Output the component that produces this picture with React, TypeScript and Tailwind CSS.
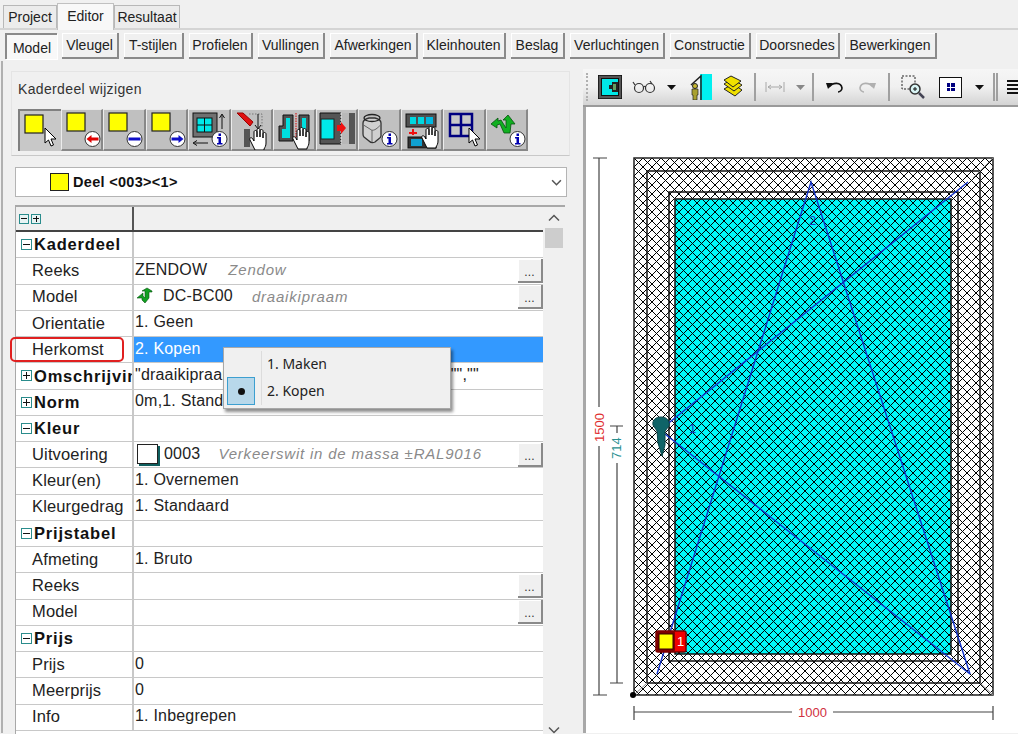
import type { ReactNode } from 'react';

const subTabs = [
  { label: 'Model', w: 52, active: true },
  { label: 'Vleugel', w: 57 },
  { label: 'T-stijlen', w: 60 },
  { label: 'Profielen', w: 64 },
  { label: 'Vullingen', w: 67 },
  { label: 'Afwerkingen', w: 88 },
  { label: 'Kleinhouten', w: 83 },
  { label: 'Beslag', w: 54 },
  { label: 'Verluchtingen', w: 95 },
  { label: 'Constructie', w: 81 },
  { label: 'Doorsnedes', w: 84 },
  { label: 'Bewerkingen', w: 92 },
];

function Cursor({ x, y }: { x: number; y: number }) {
  return (
    <path
      transform={`translate(${x} ${y})`}
      d="M0 0v15l3.500-3 2.500 6 2.500-1-2.500-6h5z"
      fill="#fff"
      stroke="#000"
      strokeWidth="1"
    />
  );
}

function Hand({ x, y }: { x: number; y: number }) {
  return (
    <path
      transform={`translate(${x} ${y})`}
      d="M5 20 1 12c-1-2 1-3 2.500-1.500L5 13V4c0-2 3-2 3 0v5V2c0-2 3-2 3 0v7-6c0-2 3-2 3 0v7-4c0-2 3-2 3 0v9c0 3-1 4-2 6v1H6z"
      fill="#fff"
      stroke="#000"
      strokeWidth="1"
    />
  );
}

function Badge({ kind }: { kind: 'left' | 'minus' | 'right' | 'info' }) {
  return (
    <g>
      <circle cx="30.500" cy="29" r="7.500" fill="#fff" stroke="#333" strokeWidth="1" />
      {kind === 'left' && <path d="M24.500 29l5-4v2.500h7v3h-7V33z" fill="#e00000" />}
      {kind === 'right' && <path d="M36.500 29l-5-4v2.500h-7v3h7V33z" fill="#1010c8" />}
      {kind === 'minus' && <rect x="24.500" y="27.500" width="12" height="3" fill="#1010c8" />}
      {kind === 'info' && (
        <g fill="#0000b0">
          <rect x="29.500" y="23.500" width="2.500" height="2.500" />
          <path d="M28 27h4v6h1.500v1.500H28V33h1.500v-4.500H28z" />
        </g>
      )}
    </g>
  );
}

function Square({ x = 5, y = 3 }: { x?: number; y?: number }) {
  return <rect x={x} y={y} width="18" height="18" fill="#ffff00" stroke="#222" strokeWidth="1.200" />;
}

const toolIcons: ReactNode[] = [
  <>
    <Square x={5} y={4} />
    <Cursor x={25} y={17} />
  </>,
  <>
    <Square />
    <Badge kind="left" />
  </>,
  <>
    <Square />
    <Badge kind="minus" />
  </>,
  <>
    <Square />
    <Badge kind="right" />
  </>,
  <>
    <rect x="4" y="3" width="24" height="24" fill="#707070" stroke="#111" />
    <rect x="8" y="8" width="15" height="14" fill="#00e8e8" stroke="#111" />
    <path d="M15.500 8v14M8 15h15" stroke="#111" />
    <path d="M33 19V5m-2.500 3L33 4l2.500 4M19 33H5m3-2.500L4 33l4 2.500" stroke="#111" fill="none" />
    <Badge kind="info" />
  </>,
  <>
    <path d="M5 3h6l10 9-3 4z" fill="#e01010" stroke="#900" />
    <path d="M12 19v18h6V19z" fill="#555" />
    <path d="M17 4h13v14" stroke="#777" strokeDasharray="1.500 1.500" fill="none" />
    <path d="M26 4v14m-3-3 3 4 3-4" stroke="#111" fill="none" />
    <Hand x={17} y={18} />
  </>,
  <>
    <path d="M5 31V16h4V5h10v26z" fill="#505050" stroke="#111" />
    <path d="M8 28V19h4V8h4v20z" fill="#00e0e0" />
    <path d="M25 5h10v26H25z" fill="#505050" stroke="#111" />
    <rect x="28" y="8" width="4" height="16" fill="#00e0e0" />
    <path d="M22 3v24" stroke="#d04040" strokeDasharray="1.500 1" strokeWidth="1.500" />
    <Hand x={18} y={17} />
  </>,
  <>
    <path d="M3 3h21v31H3z" fill="#555" stroke="#111" />
    <rect x="4" y="9" width="13" height="20" fill="#00eaea" stroke="#222" />
    <path d="M24 3h14v31H24z" fill="#b8b8b8" />
    <path d="M32 3h6v31h-6z" fill="#555" />
    <path d="M24 3v31" stroke="#eee" strokeDasharray="2 1" />
    <path d="M20 15h4v-3l5 6-5 6v-3h-4z" fill="#f01010" />
  </>,
  <>
    <path d="M4 13c0-3 2-4 6-5h6c4 1 6 2 6 5v13c0 2-3 3-6 6-2 1-4 1-6-1l-5-4c-1-1-1-2-1-3z" fill="#d0d0d0" stroke="#333" strokeWidth="1.300" />
    <path d="M4.500 15l8 5c3 1 6-2 9-5M13 20v12" stroke="#666" fill="none" />
    <ellipse cx="13" cy="8" rx="8" ry="3.500" fill="none" stroke="#222" strokeWidth="1.300" />
    <Badge kind="info" />
  </>,
  <>
    <rect x="4" y="4" width="30" height="13" fill="#505050" stroke="#111" />
    <rect x="8" y="7" width="6" height="7" fill="#00d8e0" />
    <rect x="16" y="7" width="6" height="7" fill="#00d8e0" />
    <rect x="24" y="7" width="7" height="7" fill="#00b8e0" />
    <path d="M7 22h3v-3h2v3h3v2h-3v1h-2v-1H7z" fill="#f01010" />
    <rect x="6" y="27" width="28" height="11" fill="#333" stroke="#111" />
    <rect x="9" y="29" width="11" height="7" fill="#10a0d0" />
    <Hand x={19} y={16} />
  </>,
  <>
    <rect x="6" y="4" width="22" height="22" fill="#c8c8c8" stroke="#000080" strokeWidth="2.500" />
    <path d="M17 4v22M6 15h22" stroke="#000080" strokeWidth="2.500" />
    <Cursor x={25} y={18} />
  </>,
  <>
    <path d="M4 14l7-6v3l3-1 5 8V10l-3 0 5-5 7 9h-4l-1 9h-6l-4-9-3 1v3z" fill="#10b020" stroke="#085010" strokeWidth="0.800" />
    <Badge kind="info" />
  </>,
];

const Label = ({ children }: { children: ReactNode }) => (
  <span className="pb-[1px] pl-[16px] text-[16.500px] leading-none tracking-[0.15px] text-[#222]">{children}</span>
);

function Group({ open, children }: { open: boolean; children: string }) {
  return (
    <span className="flex items-center pl-[5px] whitespace-nowrap">
      <span className="relative mr-[2px] flex h-[11px] w-[11px] shrink-0 items-center justify-center border border-[#2a8c8c] bg-white">
        <span className="h-[1px] w-[7px] bg-[#111]" />
        {!open && <span className="absolute h-[7px] w-[1px] bg-[#111]" />}
      </span>
      <span className="text-[16.500px] font-bold leading-none tracking-[0.8px] text-[#111]">{children}</span>
    </span>
  );
}

function Dots() {
  return (
    <span className="flex h-[24px] w-[25px] shrink-0 items-end justify-center border-r-2 border-b-2 border-[#8a8a8a] bg-[#f0f0f0] pb-[3px] text-[12px] leading-none text-[#333] shadow-[inset_1px_1px_0_#fff]">
      ...
    </span>
  );
}

function Row({
  left,
  children,
  dots,
  selected,
}: {
  left: ReactNode;
  children?: ReactNode;
  dots?: boolean;
  selected?: boolean;
}) {
  return (
    <div className="flex h-[26.250px] overflow-hidden border-b border-[#c8c8c8]">
      <div className="flex w-[118px] shrink-0 items-center overflow-hidden border-r-2 border-[#c8c8c8]">{left}</div>
      <div
        className={
          selected
            ? 'flex min-w-0 flex-1 items-center whitespace-nowrap bg-[#3399ff] pl-[1px] text-[16px] leading-none tracking-[0.2px] text-white'
            : 'flex min-w-0 flex-1 items-center whitespace-nowrap pl-[1px] text-[16px] leading-none tracking-[0.2px] text-[#222]'
        }
      >
        <div className="flex min-w-0 flex-1 items-center overflow-hidden pb-[2px]">{children}</div>
        {dots && <Dots />}
      </div>
    </div>
  );
}

const Hint = ({ children, className }: { children: string; className: string }) => (
  <span className={`text-[15px] italic leading-none tracking-[0.8px] text-[#8a8a8a] ${className}`}>{children}</span>
);

function PropertyGrid() {
  return (
    <div className="relative h-[529px] border-t-2 border-l border-[#a8a8a8] bg-white">
      <div className="mr-[22px]">
        <div className="flex h-[25px] border-b-2 border-[#444] bg-[#f0f0f0]">
          <div className="flex w-[118px] items-center gap-[2px] border-r-2 border-[#555] pl-[3px]">
            <span className="flex h-[10px] w-[10px] items-center justify-center border border-[#2a8c8c] bg-[#e8f4f4]">
              <span className="h-[1px] w-[6px] bg-[#111]" />
            </span>
            <span className="relative flex h-[10px] w-[10px] items-center justify-center border border-[#2a8c8c] bg-[#e8f4f4]">
              <span className="h-[1px] w-[6px] bg-[#111]" />
              <span className="absolute h-[6px] w-[1px] bg-[#111]" />
            </span>
          </div>
        </div>
        <Row left={<Group open>Kaderdeel</Group>} />
        <Row left={<Label>Reeks</Label>} dots>
          ZENDOW<Hint className="ml-[21px]">Zendow</Hint>
        </Row>
        <Row left={<Label>Model</Label>} dots>
          <svg width="19" height="18" viewBox="0 0 19 18" className="ml-[1px] mr-[8px] shrink-0">
            <path d="M1 11l6-5v3l2 2V4H6l5-3 5 3v1h-3v6l-4 5-3-3v-2z" fill="#10a020" stroke="#0a5010" strokeWidth="0.600" />
          </svg>
          DC-BC00<Hint className="ml-[19px]">draaikipraam</Hint>
        </Row>
        <Row left={<Label>Orientatie</Label>}>1. Geen</Row>
        <Row left={<Label>Herkomst</Label>} selected>
          2. Kopen
        </Row>
        <Row left={<Group open={false}>Omschrijving</Group>}>
          "draaikipraam"
          <span className="ml-[209px]">"",""</span>
        </Row>
        <Row left={<Group open={false}>Norm</Group>}>0m,1. Standaard</Row>
        <Row left={<Group open>Kleur</Group>} />
        <Row left={<Label>Uitvoering</Label>} dots>
          <span className="ml-[2px] mr-[6px] h-[20px] w-[21px] shrink-0 border border-[#222] bg-white shadow-[2px_2px_0_#0f5f5f]" />
          0003<Hint className="ml-[18px]">Verkeerswit in de massa ±RAL9016</Hint>
        </Row>
        <Row left={<Label>Kleur(en)</Label>}>1. Overnemen</Row>
        <Row left={<Label>Kleurgedrag</Label>}>1. Standaard</Row>
        <Row left={<Group open>Prijstabel</Group>} />
        <Row left={<Label>Afmeting</Label>}>1. Bruto</Row>
        <Row left={<Label>Reeks</Label>} dots />
        <Row left={<Label>Model</Label>} dots />
        <Row left={<Group open>Prijs</Group>} />
        <Row left={<Label>Prijs</Label>}>0</Row>
        <Row left={<Label>Meerprijs</Label>}>0</Row>
        <Row left={<Label>Info</Label>}>1. Inbegrepen</Row>
      </div>
      {/* Scrollbar */}
      <div className="absolute top-0 right-0 bottom-0 flex w-[22px] flex-col items-center bg-[#f0f0f0]">
        <svg width="12" height="8" viewBox="0 0 12 8" className="mt-[7px] mb-[6px]">
          <path d="M1 6.500 6 1.500l5 5" fill="none" stroke="#555" strokeWidth="1.500" />
        </svg>
        <div className="h-[20px] w-[18px] bg-[#cdcdcd]" />
      </div>
      <svg width="12" height="8" viewBox="0 0 12 8" className="absolute right-[5px] bottom-[0px]">
        <path d="M1 1.500 6 6.500l5-5" fill="none" stroke="#555" strokeWidth="1.500" />
      </svg>
      {/* Selection popup */}
      <div className="absolute top-[140px] left-[207px] h-[62px] w-[228px] border border-[#a8a8a8] bg-[#f0f0f0] shadow-[2px_3px_3px_rgba(0,0,0,0.45)]">
        <div className="absolute top-[3px] bottom-[3px] left-[37px] w-[1px] bg-[#dcdcdc]" />
        <div className="flex h-[29px] items-center pl-[43px] pt-[2px] font-['Noto_Sans',sans-serif] text-[14px] leading-none text-[#222]">
          1. Maken
        </div>
        <div className="flex h-[28px] items-center pl-[3px] font-['Noto_Sans',sans-serif] text-[14px] leading-none text-[#222]">
          <span className="mr-[12px] flex h-[28px] w-[28px] items-center justify-center border border-[#3c9fd0] bg-[#b8d8ea]">
            <span className="h-[7px] w-[7px] rounded-full bg-[#111]" />
          </span>
          2. Kopen
        </div>
      </div>
      {/* Annotation round the label */}
      <div className="absolute top-[130px] left-[-6px] h-[25px] w-[114px] rounded-[5px] border-2 border-[#e02020]" />
    </div>
  );
}

function Drawing() {
  return (
    <svg width="432" height="626" viewBox="586 108 432 626" className="block">
      <defs>
        <pattern id="hatch" width="9" height="9" patternUnits="userSpaceOnUse" x="634" y="159">
          <path d="M0 9 9 0M0 0l9 9" stroke="#000" strokeWidth="1" fill="none" shapeRendering="crispEdges" />
        </pattern>
      </defs>
      <rect x="634" y="159" width="359" height="537" fill="#fff" />
      <rect x="675" y="200" width="276" height="455" fill="#00f8f8" />
      <rect x="634" y="159" width="359" height="537" fill="url(#hatch)" stroke="#222" strokeWidth="1.500" />
      <rect x="647" y="172" width="333" height="512" fill="none" stroke="#111" strokeWidth="1.500" />
      <rect x="669" y="193" width="289" height="469" fill="none" stroke="#111" strokeWidth="1.500" />
      <rect x="675" y="200" width="276" height="455" fill="none" stroke="#111" strokeWidth="1.500" />
      <path d="M634 696l13-12M993 696l-13-12M993 159l-20 20" stroke="#888" />
      <g stroke="#1030c8" strokeWidth="1.400" fill="none">
        <path d="M657 675 811 183 970 675" />
        <path d="M968 183 660 431 970 675" />
      </g>
      <text x="809" y="226" fill="#1838c0" fontSize="13" fontFamily="Liberation Sans, sans-serif">2</text>
      <text x="689" y="434" fill="#1838c0" fontSize="13" fontFamily="Liberation Sans, sans-serif">1</text>
      <path d="M653 426c-1-5 3-8 8-8 6 0 9 4 8 9l-4 5 0 14-3 11-4-13-1-12z" fill="#0f6468" stroke="#0a4448" />
      <rect x="656" y="632" width="30" height="21" rx="2" fill="#f00000" stroke="#700" strokeWidth="1.500" />
      <rect x="656" y="632" width="19" height="21" rx="2" fill="#800000" />
      <rect x="659" y="635" width="14" height="15" fill="#ffff00" stroke="#300" />
      <text x="677" y="647" fill="#fff" fontSize="13" fontFamily="Liberation Sans, sans-serif">1</text>
      <circle cx="633" cy="696" r="3" fill="#000" />
      {/* Dimension lines */}
      <g stroke="#444" strokeWidth="1.200" fill="none">
        <path d="M593 159h14M593 696h14M599 159v249M599 447v249" />
        <path d="M610 427h13M610 684h13M617 427v7M617 464v220" />
        <path d="M634 707v14M993 707v14M634 713h158M833 713h160" />
      </g>
      <text transform="translate(604 443) rotate(-90)" fill="#e03030" fontSize="13" fontFamily="Liberation Sans, sans-serif">1500</text>
      <text transform="translate(621 460) rotate(-90)" fill="#2a9090" fontSize="13" fontFamily="Liberation Sans, sans-serif">714</text>
      <text x="798" y="718" fill="#d03040" fontSize="13" fontFamily="Liberation Sans, sans-serif">1000</text>
    </svg>
  );
}

const Sep = ({ className }: { className: string }) => <span className={`h-[28px] w-[2px] shrink-0 bg-[#a0a0a0] ${className}`} />;
const Caret = ({ className, color = '#111' }: { className: string; color?: string }) => (
  <svg width="9" height="5" viewBox="0 0 9 5" className={`shrink-0 ${className}`}>
    <path d="M0 0h9L4.500 5z" fill={color} />
  </svg>
);

function DrawToolbar() {
  return (
    <div className="flex h-[39px] items-center overflow-hidden border-b-2 border-[#9a9a9a] bg-linear-to-b from-[#f6f6f6] via-[#f0f0f0] to-[#d4d4d4]">
      <span className="ml-[3px] h-[28px] w-[3px] shrink-0 border-l-2 border-dotted border-[#b0b0b0]" />
      <svg width="24" height="24" viewBox="0 0 24 24" className="ml-[9px] shrink-0">
        <rect width="24" height="24" fill="#555" stroke="#111" strokeWidth="1.500" />
        <rect x="3.500" y="3.500" width="17" height="17" fill="#00e8e8" stroke="#111" />
        <path d="M14 7h6v10h-6v-3h-3v-4h3z" fill="#222" />
        <rect x="15" y="9" width="3" height="6" fill="#60a060" />
      </svg>
      <svg width="25" height="14" viewBox="0 0 25 14" className="ml-[10px] shrink-0">
        <g fill="none" stroke="#333" strokeWidth="1.200">
          <ellipse cx="7" cy="8" rx="4.500" ry="4.500" />
          <ellipse cx="18" cy="8" rx="4.500" ry="4.500" />
          <path d="M11.500 7c1-1 2-1 2 0M1 2l2 3M18 1l2 3" />
        </g>
      </svg>
      <Caret className="ml-[10px]" />
      <svg width="22" height="26" viewBox="0 0 22 26" className="ml-[14px] shrink-0">
        <rect x="10" width="12" height="26" fill="#00f0f0" />
        <path d="M1 11 11 2l0 24" fill="none" stroke="#222" strokeWidth="1.500" />
        <circle cx="5" cy="12" r="2.500" fill="#c8b830" stroke="#222" />
        <path d="M2 15h6v6H7v5H3v-5H2z" fill="#a8a030" stroke="#222" strokeWidth="0.700" />
      </svg>
      <svg width="20" height="24" viewBox="0 0 20 24" className="ml-[11px] shrink-0">
        <g fill="#f0e000" stroke="#222" strokeWidth="1">
          <path d="M1 14l9-5 9 6-7 6z" />
          <path d="M1 9l8-5 10 6-8 6z" />
          <path d="M1 5l7-4 10 5-8 6z" />
        </g>
      </svg>
      <Sep className="ml-[11px]" />
      <svg width="20" height="12" viewBox="0 0 20 12" className="ml-[9px] shrink-0">
        <path d="M1 1v10M19 1v10M3 6h14M3 6l3-2M3 6l3 2M17 6l-3-2M17 6l-3 2" stroke="#a8a8a8" fill="none" />
      </svg>
      <Caret className="ml-[11px]" color="#888" />
      <Sep className="ml-[7px]" />
      <svg width="17" height="12" viewBox="0 0 17 12" className="ml-[12px] shrink-0">
        <path d="M3 6c4-5 12-5 13 1 0 2-2 4-4 4" fill="none" stroke="#111" strokeWidth="1.600" />
        <path d="M0 2h7l-5 6z" fill="#111" />
      </svg>
      <svg width="17" height="12" viewBox="0 0 17 12" className="ml-[16px] shrink-0">
        <path d="M14 6C10 1 2 1 1 7c0 2 2 4 4 4" fill="none" stroke="#b0b0b0" strokeWidth="1.600" />
        <path d="M17 2h-7l5 6z" fill="#b0b0b0" />
      </svg>
      <Sep className="ml-[12px]" />
      <svg width="24" height="24" viewBox="0 0 24 24" className="ml-[11px] shrink-0">
        <rect x="1" y="1" width="13" height="13" fill="none" stroke="#222" strokeDasharray="2 1.500" />
        <circle cx="14" cy="14" r="5" fill="#d8f4f4" stroke="#333" strokeWidth="1.500" />
        <path d="M12 14h4M14 12v4" stroke="#111" />
        <path d="M18 18l5 5" stroke="#445" strokeWidth="2.500" />
      </svg>
      <span className="ml-[14px] flex h-[21px] w-[23px] shrink-0 items-center justify-center border border-[#111] bg-white">
        <span className="grid h-[8px] w-[8px] grid-cols-2 gap-[1px] bg-white">
          <span className="bg-[#000080]" />
          <span className="bg-[#000080]" />
          <span className="bg-[#000080]" />
          <span className="bg-[#000080]" />
        </span>
      </span>
      <Caret className="ml-[13px]" />
      <Sep className="ml-[9px]" />
      <Sep className="ml-[1px]" />
      <div className="ml-[9px] flex shrink-0 flex-col gap-[2px]">
        <span className="h-[2px] w-[16px] bg-[#111]" />
        <span className="h-[2px] w-[12px] bg-[#111]" />
        <span className="h-[2px] w-[16px] bg-[#111]" />
        <span className="h-[2px] w-[12px] bg-[#111]" />
      </div>
    </div>
  );
}

export default function App() {
  return (
    <div className="h-[734px] w-[1018px] overflow-hidden bg-[#f0f0f0] font-['Liberation_Sans',Arial,sans-serif] text-[#222]">
      {/* Main tabs */}
      <div className="mt-[1px] flex h-[29px] items-end border-b-2 border-[#d4d4d4] pl-[3px] text-[14px] leading-none">
        <div className="flex h-[23px] w-[54px] items-center justify-center border border-b-0 border-[#b8b8b8] bg-[#ececec]">Project</div>
        <div className="z-10 mb-[-2px] flex h-[27px] w-[57px] items-start justify-center border border-b-0 border-[#c0c0c0] bg-[#f8f8f8] pt-[5px]">Editor</div>
        <div className="flex h-[23px] w-[66px] items-center justify-center border border-b-0 border-[#b8b8b8] bg-[#ececec]">Resultaat</div>
      </div>

      {/* Sub tabs */}
      <div className="flex h-[31px] items-center gap-[5px] pl-[5px] text-[14px] leading-none">
        {subTabs.map((t) => (
          <div
            key={t.label}
            style={{ width: t.w }}
            className={
              t.active
                ? 'flex h-[26px] shrink-0 items-center justify-center border-t-2 border-l-2 border-[#8a8a8a] bg-[#f8f8f8] pt-[2px] shadow-[1px_1px_0_#fff]'
                : 'flex h-[26px] shrink-0 items-center justify-center border-r-2 border-b-2 border-[#8a8a8a] bg-[#f0f0f0] shadow-[inset_1px_1px_0_#fff]'
            }
          >
            {t.label}
          </div>
        ))}
      </div>

      <div className="ml-[1px] flex h-[672px] border-l-2 border-[#b0b0b0]">
        {/* Left panel */}
        <div className="ml-[8px] mt-[10px] w-[559px] shrink-0">
          <div className="h-[85px] border border-[#e4e4e4] border-b-[#c8c8c8] pl-[6px]">
            <div className="pt-[9px] text-[14px] leading-[16px] tracking-[0.35px] text-[#333]">Kaderdeel wijzigen</div>
            <div className="mt-[12px] flex">
              {toolIcons.map((icon, i) => (
                <div
                  key={i}
                  className={
                    i === 0
                      ? 'h-[42px] w-[42.500px] shrink-0 border-t-2 border-l-2 border-[#808080] bg-[#c8c8c8]'
                      : 'h-[42px] w-[42.500px] shrink-0 border-t border-l border-[#ececec] border-r-2 border-b-2 border-r-[#888] border-b-[#888] bg-[#c0c0c0]'
                  }
                >
                  <svg width="40" height="40" viewBox="0 0 40 40">
                    {icon}
                  </svg>
                </div>
              ))}
            </div>
          </div>

          {/* Part selector */}
          <div className="mt-[11px] ml-[4px] flex h-[30px] w-[552px] items-center border border-[#b4b4b4] bg-white pl-[34px]">
            <span className="mr-[4px] h-[18px] w-[19px] border border-[#222] bg-[#ffff00]" />
            <span className="text-[14.500px] font-bold leading-none tracking-[0.3px] text-[#111]">Deel &lt;003&gt;&lt;1&gt;</span>
            <svg width="11" height="7" viewBox="0 0 12 8" className="ml-auto mr-[4px]">
              <path d="M1 1.500 6 6.500l5-5" fill="none" stroke="#555" strokeWidth="1.800" />
            </svg>
          </div>

          <div className="mt-[8px] ml-[4px] w-[550px]">
            <PropertyGrid />
          </div>
        </div>

        {/* Right panel */}
        <div className="ml-[13px] mt-[8px] flex min-w-0 flex-1 flex-col">
          <DrawToolbar />
          <div className="flex-1 border-l-[3px] border-[#a8a8a8] bg-white">
            <Drawing />
          </div>
        </div>
      </div>
    </div>
  );
}
